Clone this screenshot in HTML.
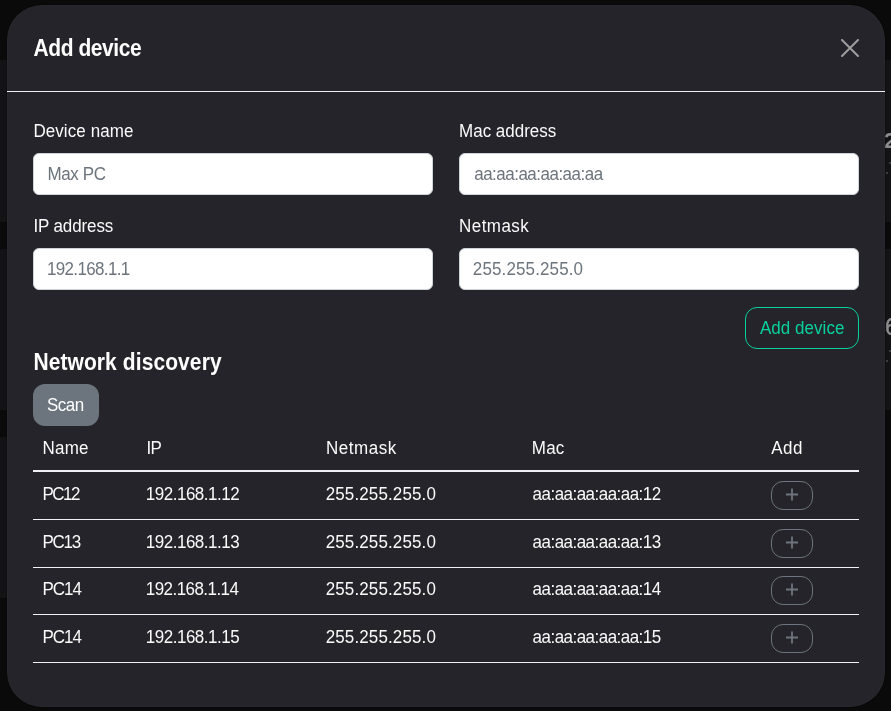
<!DOCTYPE html>
<html><head><meta charset="utf-8">
<style>
*{box-sizing:border-box;margin:0;padding:0}
html,body{width:891px;height:711px;overflow:hidden;background:#0a0a0a;font-family:"Liberation Sans",sans-serif;position:relative}
.band{position:absolute;left:0;width:891px;background:#131315}
.modal{position:absolute;left:7px;top:5px;width:878px;height:702px;border-radius:35px;background:#25242a;border:1px solid rgba(255,255,255,0.02);box-shadow:0 0 0 1px rgba(0,0,0,0.22)}
.t{position:absolute;white-space:nowrap;line-height:1}
.inp{position:absolute;width:400px;height:42px;background:#fff;border:1px solid #ced4da;border-radius:6px}
.hl{position:absolute;left:33px;width:826px;height:1px;background:#f1f0f5}
.plus{position:absolute;left:771px;width:42px;height:29px;border:1px solid #6c757d;border-radius:12px}
</style></head><body>
<div class="band" style="top:60px;height:162px"></div>
<div class="band" style="top:249px;height:161px"></div>
<div class="band" style="top:437px;height:161px;width:400px"></div>
<div style="position:absolute;left:860px;top:100px;width:31px;height:280px;will-change:transform"><div class="t" style="left:24px;top:30px;font-size:22px;font-weight:bold;color:#8c8c8c">2</div>
<div class="t" style="left:25px;top:216px;font-size:23px;color:#8c8c8c;-webkit-text-stroke:0.5px #8c8c8c">6</div></div>
<div style="position:absolute;left:889px;top:162px;width:3px;height:2px;background:#3a3d40"></div>
<div style="position:absolute;left:886px;top:172px;width:2px;height:2px;background:#3a3d40"></div>
<div style="position:absolute;left:889px;top:350px;width:3px;height:2px;background:#3a3d40"></div>
<div style="position:absolute;left:886px;top:360px;width:2px;height:2px;background:#3a3d40"></div>
<div class="modal"></div>
<svg style="position:absolute;left:841px;top:39px" width="18" height="18" viewBox="0 0 18 18"><path d="M1 1L17 17M17 1L1 17" stroke="#9e9e9e" stroke-width="2" stroke-linecap="round"/></svg>
<div style="position:absolute;left:7px;top:91px;width:878px;height:1px;background:#f1f0f5"></div>
<div class="inp" style="left:33px;top:153px"></div>
<div class="inp" style="left:459px;top:153px"></div>
<div class="inp" style="left:33px;top:248px"></div>
<div class="inp" style="left:459px;top:248px"></div>
<div style="position:absolute;left:745px;top:307px;width:114px;height:42px;border:1px solid #09d19e;border-radius:12px"></div>
<div style="position:absolute;left:33px;top:384px;width:66px;height:42px;background:#6c757d;border-radius:12px"></div>
<div class="hl" style="top:470px;height:2px"></div>
<div class="hl" style="top:519px"></div>
<div class="hl" style="top:567px"></div>
<div class="hl" style="top:614px"></div>
<div class="hl" style="top:662px"></div>
<div class="plus" style="top:481px"><svg style="position:absolute;left:14px;top:5.5px" width="12" height="13" viewBox="0 0 12 13"><path d="M0 6.5H12M6 0.5V12.5" stroke="#6c757d" stroke-width="1.8"/></svg></div>
<div class="plus" style="top:529px"><svg style="position:absolute;left:14px;top:5.5px" width="12" height="13" viewBox="0 0 12 13"><path d="M0 6.5H12M6 0.5V12.5" stroke="#6c757d" stroke-width="1.8"/></svg></div>
<div class="plus" style="top:576px"><svg style="position:absolute;left:14px;top:5.5px" width="12" height="13" viewBox="0 0 12 13"><path d="M0 6.5H12M6 0.5V12.5" stroke="#6c757d" stroke-width="1.8"/></svg></div>
<div class="plus" style="top:624px"><svg style="position:absolute;left:14px;top:5.5px" width="12" height="13" viewBox="0 0 12 13"><path d="M0 6.5H12M6 0.5V12.5" stroke="#6c757d" stroke-width="1.8"/></svg></div>
<div style="position:absolute;left:0;top:0;width:891px;height:711px;will-change:transform"><div class="t" style="transform:scaleY(1.12);transform-origin:0 18px;left:33.5px;top:38.0px;font-size:21px;font-weight:bold;color:#ffffff;letter-spacing:-0.43px">Add device</div>
<div class="t" style="transform:scaleY(1.09);transform-origin:0 14px;left:33.4px;top:123.0px;font-size:17px;font-weight:normal;color:#fafafa;letter-spacing:0.08px">Device name</div>
<div class="t" style="transform:scaleY(1.09);transform-origin:0 14px;left:459.1px;top:123.0px;font-size:17px;font-weight:normal;color:#fafafa;letter-spacing:-0.02px">Mac address</div>
<div class="t" style="transform:scaleY(1.09);transform-origin:0 14px;left:33.4px;top:218.0px;font-size:17px;font-weight:normal;color:#fafafa;letter-spacing:-0.12px">IP address</div>
<div class="t" style="transform:scaleY(1.09);transform-origin:0 14px;left:459.1px;top:218.0px;font-size:17px;font-weight:normal;color:#fafafa;letter-spacing:0.43px">Netmask</div>
<div class="t" style="transform:scaleY(1.09);transform-origin:0 14px;left:47.6px;top:166.0px;font-size:17px;font-weight:normal;color:#6c757d;letter-spacing:-0.42px">Max PC</div>
<div class="t" style="transform:scaleY(1.09);transform-origin:0 14px;left:474.2px;top:166.0px;font-size:17px;font-weight:normal;color:#6c757d;letter-spacing:-0.51px">aa:aa:aa:aa:aa:aa</div>
<div class="t" style="transform:scaleY(1.09);transform-origin:0 14px;left:46.9px;top:261.0px;font-size:17px;font-weight:normal;color:#6c757d;letter-spacing:-0.64px">192.168.1.1</div>
<div class="t" style="transform:scaleY(1.09);transform-origin:0 14px;left:472.8px;top:261.0px;font-size:17px;font-weight:normal;color:#6c757d;letter-spacing:0.13px">255.255.255.0</div>
<div class="t" style="transform:scaleY(1.09);transform-origin:0 14px;left:760.0px;top:320.0px;font-size:17px;font-weight:normal;color:#09d19e;letter-spacing:0.03px">Add device</div>
<div class="t" style="transform:scaleY(1.12);transform-origin:0 18px;left:33.4px;top:352.0px;font-size:21px;font-weight:bold;color:#ffffff;letter-spacing:0.09px">Network discovery</div>
<div class="t" style="transform:scaleY(1.09);transform-origin:0 14px;left:46.9px;top:397.0px;font-size:17px;font-weight:normal;color:#ffffff;letter-spacing:-0.47px">Scan</div>
<div class="t" style="transform:scaleY(1.09);transform-origin:0 14px;left:42.4px;top:440.0px;font-size:17px;font-weight:normal;color:#fafafa;letter-spacing:0.27px">Name</div>
<div class="t" style="transform:scaleY(1.09);transform-origin:0 14px;left:146.5px;top:440.0px;font-size:17px;font-weight:normal;color:#fafafa;letter-spacing:-0.84px">IP</div>
<div class="t" style="transform:scaleY(1.09);transform-origin:0 14px;left:325.9px;top:440.0px;font-size:17px;font-weight:normal;color:#fafafa;letter-spacing:0.56px">Netmask</div>
<div class="t" style="transform:scaleY(1.09);transform-origin:0 14px;left:531.8px;top:440.0px;font-size:17px;font-weight:normal;color:#fafafa;letter-spacing:0.20px">Mac</div>
<div class="t" style="transform:scaleY(1.09);transform-origin:0 14px;left:771.2px;top:440.0px;font-size:17px;font-weight:normal;color:#fafafa;letter-spacing:0.51px">Add</div>
<div class="t" style="transform:scaleY(1.09);transform-origin:0 14px;left:42.4px;top:486.0px;font-size:17px;font-weight:normal;color:#fafafa;letter-spacing:-1.50px">PC12</div>
<div class="t" style="transform:scaleY(1.09);transform-origin:0 14px;left:145.8px;top:486.0px;font-size:17px;font-weight:normal;color:#fafafa;letter-spacing:-0.49px">192.168.1.12</div>
<div class="t" style="transform:scaleY(1.09);transform-origin:0 14px;left:325.7px;top:486.0px;font-size:17px;font-weight:normal;color:#fafafa;letter-spacing:0.12px">255.255.255.0</div>
<div class="t" style="transform:scaleY(1.09);transform-origin:0 14px;left:532.6px;top:486.0px;font-size:17px;font-weight:normal;color:#fafafa;letter-spacing:-0.53px">aa:aa:aa:aa:aa:12</div>
<div class="t" style="transform:scaleY(1.09);transform-origin:0 14px;left:42.4px;top:534.0px;font-size:17px;font-weight:normal;color:#fafafa;letter-spacing:-1.21px">PC13</div>
<div class="t" style="transform:scaleY(1.09);transform-origin:0 14px;left:145.8px;top:534.0px;font-size:17px;font-weight:normal;color:#fafafa;letter-spacing:-0.49px">192.168.1.13</div>
<div class="t" style="transform:scaleY(1.09);transform-origin:0 14px;left:325.7px;top:534.0px;font-size:17px;font-weight:normal;color:#fafafa;letter-spacing:0.12px">255.255.255.0</div>
<div class="t" style="transform:scaleY(1.09);transform-origin:0 14px;left:532.6px;top:534.0px;font-size:17px;font-weight:normal;color:#fafafa;letter-spacing:-0.53px">aa:aa:aa:aa:aa:13</div>
<div class="t" style="transform:scaleY(1.09);transform-origin:0 14px;left:42.4px;top:581.0px;font-size:17px;font-weight:normal;color:#fafafa;letter-spacing:-0.99px">PC14</div>
<div class="t" style="transform:scaleY(1.09);transform-origin:0 14px;left:145.8px;top:581.0px;font-size:17px;font-weight:normal;color:#fafafa;letter-spacing:-0.56px">192.168.1.14</div>
<div class="t" style="transform:scaleY(1.09);transform-origin:0 14px;left:325.7px;top:581.0px;font-size:17px;font-weight:normal;color:#fafafa;letter-spacing:0.12px">255.255.255.0</div>
<div class="t" style="transform:scaleY(1.09);transform-origin:0 14px;left:532.6px;top:581.0px;font-size:17px;font-weight:normal;color:#fafafa;letter-spacing:-0.53px">aa:aa:aa:aa:aa:14</div>
<div class="t" style="transform:scaleY(1.09);transform-origin:0 14px;left:42.4px;top:629.0px;font-size:17px;font-weight:normal;color:#fafafa;letter-spacing:-0.99px">PC14</div>
<div class="t" style="transform:scaleY(1.09);transform-origin:0 14px;left:145.8px;top:629.0px;font-size:17px;font-weight:normal;color:#fafafa;letter-spacing:-0.49px">192.168.1.15</div>
<div class="t" style="transform:scaleY(1.09);transform-origin:0 14px;left:325.7px;top:629.0px;font-size:17px;font-weight:normal;color:#fafafa;letter-spacing:0.12px">255.255.255.0</div>
<div class="t" style="transform:scaleY(1.09);transform-origin:0 14px;left:532.6px;top:629.0px;font-size:17px;font-weight:normal;color:#fafafa;letter-spacing:-0.53px">aa:aa:aa:aa:aa:15</div></div>
</body></html>
